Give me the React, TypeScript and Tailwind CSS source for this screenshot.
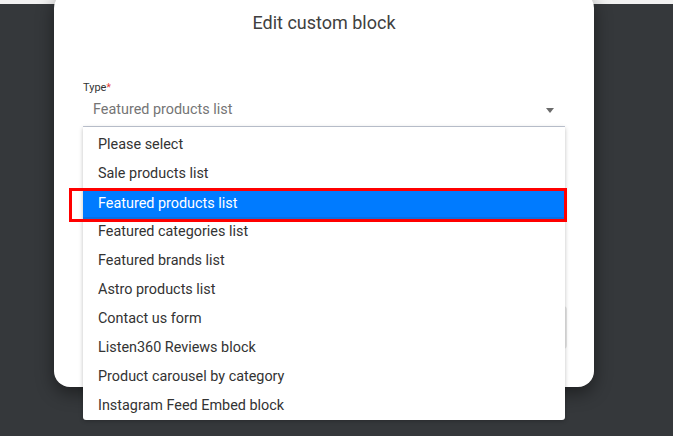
const options = [
  'Please select',
  'Sale products list',
  'Featured products list',
  'Featured categories list',
  'Featured brands list',
  'Astro products list',
  'Contact us form',
  'Listen360 Reviews block',
  'Product carousel by category',
  'Instagram Feed Embed block',
]

const selected = 'Featured products list'

export default function App() {
  return (
    <div className="w-[673px] h-[436px] overflow-hidden bg-[#35383b] font-['Roboto',_'Liberation_Sans',_sans-serif]">
      <div className="h-[4px] bg-[#f2f2f2]" />
      <div className="relative -mt-[12px] ml-[54px] w-[540px] h-[395px] bg-white rounded-[16px] shadow-[0_6px_18px_rgba(0,0,0,0.45)] px-[29px] pt-[19px]">
        <h2 className="text-center text-[18px] leading-[24px] text-[#404040]">Edit custom block</h2>

        <div className="mt-[46px]">
          <label className="block text-[11px] leading-[14px] text-[#333]">
            Type<span className="text-[#e53935] align-top text-[10px]">*</span>
          </label>
          <div className="relative mt-[5px]">
            <div className="flex items-center justify-between pl-[10px] pr-[10px] pb-[6px] border-b border-[#c3c9d6]">
              <span className="text-[14.4px] leading-[20px] text-[#757575]">{selected}</span>
              <svg width="8" height="5" viewBox="0 0 8 5" className="mr-[1px]">
                <path d="M0 0h8L4 5z" fill="#6b6b6b" />
              </svg>
            </div>

            <div className="absolute left-0 right-0 top-full z-20 bg-white rounded-b-[3px] shadow-[0_1px_4px_rgba(0,0,0,0.25)] pt-[3px]">
              {options.map((o) =>
                o === selected ? (
                  <div key={o} className="relative h-[29px] flex items-center px-[15px] text-[14.4px] text-white">
                    <div className="absolute left-0 right-0 top-[3px] h-[28px] bg-[#007bff] border-b-2 border-[#0b6fdf]" />
                    <span className="relative pt-[3px]">{o}</span>
                    <div className="absolute -left-[14px] top-0 w-[498px] h-[34px] border-[3px] border-[#ff0000]" />
                  </div>
                ) : (
                  <div key={o} className="h-[29px] flex items-center px-[15px] text-[14.4px] text-[#333]">
                    {o}
                  </div>
                )
              )}
            </div>
          </div>
        </div>

        <div className="flex justify-end mt-[179px] -mr-[2px]">
          <div className="w-[90px] h-[43px] rounded-[4px] bg-[#e6e6e6]" />
        </div>
      </div>
    </div>
  )
}
